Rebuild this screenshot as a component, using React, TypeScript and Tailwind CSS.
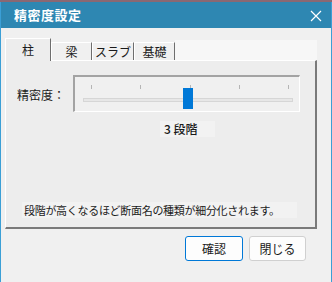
import React from 'react';

const jp = { fontFamily: '"Noto Sans CJK JP", "Noto Sans", sans-serif' };

const tabs = ['柱', '梁', 'スラブ', '基礎'];
const tabWidths = ['w-[46px]', 'w-[41px]', 'w-[42px]', 'w-[41px]'];
const ticks = [16, 65, 115, 164, 213];

const App: React.FC = () => {
  return (
    <div style={jp} className="w-[332px] h-[282px] bg-[#f0f0f0] flex flex-col overflow-hidden text-[#1a1a1a]">
      <div className="h-[2px] bg-[#8a6873]" />
      <div className="flex-1 flex flex-col border-x border-[#3b9fd6]">
        <header className="h-[26px] bg-[#2e87b2] flex items-center justify-between pl-[13px] pr-[9px] text-white">
          <span className="text-[13px] font-bold tracking-[0.5px]">精密度設定</span>
          <svg width="12" height="12" viewBox="0 0 12 12" className="mt-[1px]">
            <path d="M1 1 L11 11 M11 1 L1 11" stroke="white" strokeWidth="1.2" fill="none" />
          </svg>
        </header>

        <div className="flex flex-col pl-[4px] pr-[14px]">
          <div className="mt-[10px] h-[22px] flex items-end">
            {tabs.map((t, i) => (
              <div
                key={t}
                className={
                  i === 0
                    ? `${tabWidths[i]} h-[23px] -mb-px relative z-10 bg-[#ededed] border-t border-l border-white border-r border-r-[#6e6e6e] flex items-center justify-center text-[12px]`
                    : `${tabWidths[i]} h-[18px] bg-[#f0f0f0] border-t border-l border-white border-r border-r-[#6e6e6e] flex items-center justify-center text-[12px]`
                }
              >
                {t}
              </div>
            ))}
            <div className="flex-1 h-[20px] bg-[#f7f7f7]" />
          </div>

          <section className="h-[169px] bg-[#ededed] border-t border-l border-white border-r-2 border-b-2 border-r-[#7a7a7a] border-b-[#7a7a7a] flex flex-col">
            <div className="mt-[14px] flex items-center pl-[11px]">
              <span className="w-[56px] text-[12px] mt-[3px]">精密度：</span>
              <div className="relative w-[227px] h-[37px] border-t-2 border-l-2 border-[#a3a3a3] border-r border-b border-r-white border-b-white bg-[#f0f0f0]">
                {ticks.map(x => (
                  <div key={x} className="absolute top-[8px] w-px h-[4px] bg-[#b5b5b5]" style={{ left: x }} />
                ))}
                <div className="absolute left-[8px] top-[21px] w-[210px] h-[4px] bg-[#e7e7e7] border border-[#d6d6d6]" />
                <div className="absolute left-[108px] top-[11px] w-[10px] h-[21px] bg-[#0078d7]" />
              </div>
            </div>

            <div className="mt-[9px] pl-[154px]">
              <div className="w-[55px] h-[16px] bg-[#f2f2f2] flex items-center pl-[4px] text-[12px] font-medium">
                3 段階
              </div>
            </div>

            <div className="mt-[65px] pl-[16px]">
              <div className="w-[275px] h-[16px] bg-[#f2f2f2] flex items-center pl-[2px] text-[11px] tracking-[-0.3px]">
                段階が高くなるほど断面名の種類が細分化されます。
              </div>
            </div>
          </section>

          <div className="mt-[7px] flex justify-end gap-[6px] pr-[11px]">
            <button className="w-[58px] h-[25px] rounded-[3px] border border-[#0078d7] bg-[#fdfdfd] text-[12px]">確認</button>
            <button className="w-[57px] h-[25px] rounded-[3px] border border-[#d0d0d0] bg-[#fdfdfd] text-[12px]">閉じる</button>
          </div>
        </div>
      </div>
    </div>
  );
};

export default App;
